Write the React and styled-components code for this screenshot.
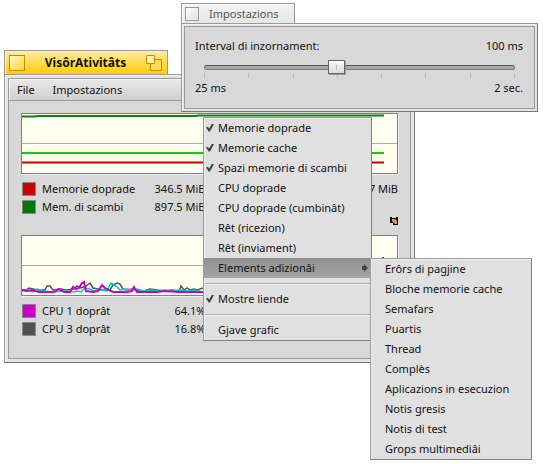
import React, { useState } from "react";
import styled, { createGlobalStyle, css } from "styled-components";

const Global = createGlobalStyle`
  *, *::before, *::after { box-sizing: border-box; }
  body {
    margin: 0;
    background: #fff;
    color: #111;
    font: 11px/20px "Noto Sans", "Open Sans", sans-serif;
  }
  button, input { font: inherit; color: inherit; margin: 0; }
`;

const Desktop = styled.main`
  position: relative;
  min-height: 100vh;
  overflow: hidden;
`;

const WindowShell = styled.section`
  position: absolute;
  display: flex;
  flex-direction: column;
  align-items: flex-start;
`;

const ActivityWindow = styled(WindowShell)`
  left: 4px;
  top: 50px;
  width: 411px;
`;

const SettingsWindow = styled(WindowShell)`
  left: 181px;
  top: 3px;
  width: 357px;
`;

const Tab = styled.header`
  display: flex;
  align-items: center;
  border: 1px solid #999;
  border-bottom: 0;
  ${(p) =>
    p.$active
      ? css`
          height: 24px;
          width: 164px;
          padding: 1px 4px 0;
          justify-content: space-between;
          background: linear-gradient(#ffedad, #ffe169 35%, #ffcb05);
          box-shadow: inset 1px 1px #fff0c0;
        `
      : css`
          height: 20px;
          width: 114px;
          padding: 1px 3px 0;
          gap: 10px;
          background: linear-gradient(#f3f3f3, #e6e6e6);
          color: #555;
          box-shadow: inset 1px 1px #fff;
        `}
`;

const Title = styled.h1`
  margin: 0;
  font-size: 12px;
  line-height: 20px;
  font-weight: 700;
`;

const QuietTitle = styled(Title)`
  font-size: 11px;
  font-weight: 400;
`;

const CloseButton = styled.button`
  width: ${(p) => (p.$active ? 16 : 14)}px;
  height: ${(p) => (p.$active ? 16 : 14)}px;
  padding: 0;
  border: 1px solid ${(p) => (p.$active ? "#b8900a" : "#999")};
  background: ${(p) =>
    p.$active
      ? "linear-gradient(135deg, #fff6cf, #ffd331)"
      : "linear-gradient(135deg, #fff, #dedede)"};
`;

const ZoomButton = styled.button`
  width: 17px;
  height: 17px;
  padding: 0;
  border: 0;
  background: none;
  svg { display: block; }
`;

const Frame = styled.div`
  width: 100%;
  padding: 3px;
  border: 1px solid #999;
  border-right-color: #777;
  border-bottom-color: #777;
  background: #e4e4e4;
  box-shadow: inset 1px 1px #f4f4f4;
`;

const SlimFrame = styled(Frame)`
  padding: 2px;
`;

const Client = styled.div`
  border: 1px solid #999;
  background: #d8d8d8;
`;

const MenuBar = styled.nav`
  display: flex;
  gap: 18px;
  height: 22px;
  padding: 0 8px;
  border-bottom: 1px solid #999;
  background: linear-gradient(#e9e9e9, #d0d0d0);
  box-shadow: inset 1px 1px #f4f4f4;
`;

const BarButton = styled.button`
  padding: 0;
  border: 0;
  background: none;
`;

const Monitor = styled.div`
  display: grid;
  gap: 19px;
  padding: 12px 12px 20px;
`;

const Graph = styled.div`
  height: 61px;
  border: 1px solid #808080;
  box-shadow: 1px 1px #eee;
  background: #fffff0;
  svg { display: block; width: 100%; height: 59px; }
`;

const Legend = styled.div`
  display: grid;
  grid-template-columns: 1fr 1fr;
  column-gap: 8px;
  padding-top: 6px;
`;

const Entry = styled.div`
  display: flex;
  align-items: center;
  height: 18px;
`;

const Swatch = styled.span`
  width: 14px;
  height: 14px;
  margin-left: 1px;
  margin-right: 6px;
  border: 1px solid #888;
  background: ${(p) => p.$color};
`;

const Value = styled.span`
  margin-left: auto;
`;

const Handle = styled.div`
  display: flex;
  justify-content: flex-end;
  height: 0;
  svg { flex: none; margin-top: 1px; }
`;

const Settings = styled.div`
  padding: 9px 11px 10px 10px;
`;

const Line = styled.div`
  display: flex;
  justify-content: space-between;
`;

const SliderBox = styled.div`
  position: relative;
  height: 22px;
  &::before {
    content: "";
    position: absolute;
    left: 9px;
    right: 8px;
    top: 9px;
    height: 5px;
    border: 1px solid #777;
    border-top-color: #555;
    border-radius: 3px;
    background: #aaa;
  }
`;

const Slider = styled.input`
  position: relative;
  display: block;
  appearance: none;
  width: 100%;
  height: 22px;
  background: none;
  &::-webkit-slider-thumb {
    appearance: none;
    width: 17px;
    height: 14px;
    border: 1px solid #666;
    background:
      linear-gradient(#bbb, #bbb) center / 1px 5px no-repeat,
      linear-gradient(#fafafa, #dcdcdc);
    box-shadow: 1px 1px #999;
  }
`;

const Ticks = styled.div`
  display: flex;
  justify-content: space-between;
  height: 5px;
  margin: -5px 8px 0 9px;
  i { width: 1px; background: #bbb; }
`;

const Popup = styled.div`
  position: absolute;
  left: ${(p) => p.$x}px;
  top: ${(p) => p.$y}px;
  width: ${(p) => p.$w}px;
  border: 1px solid #999;
  border-right-color: #808080;
  border-bottom-color: #808080;
  background: #e0e0e0;
  box-shadow: inset 1px 1px #eee;
`;

const Item = styled.button`
  display: flex;
  align-items: center;
  width: 100%;
  height: 20px;
  padding: 0 2px 0 14px;
  border: 0;
  background: ${(p) => (p.$selected ? "linear-gradient(#919191, #a5a5a5)" : "none")};
  text-align: left;
  white-space: nowrap;
  svg { flex: none; }
`;

const CheckSlot = styled.span`
  display: flex;
  align-items: center;
  width: 10px;
  margin-left: -12px;
  margin-right: 2px;
`;

const Arrow = styled.svg`
  margin-left: auto;
`;

const Rule = styled.hr`
  height: 2px;
  margin: 5px 1px 4px;
  border: 0;
  border-top: 1px solid #aaa;
  background: #f4f4f4;
`;

const elements = [
  ["Memorie doprade", true],
  ["Memorie cache", true],
  ["Spazi memorie di scambi", true],
  ["CPU doprade", false],
  ["CPU doprade (cumbinât)", false],
  ["Rêt (ricezion)", false],
  ["Rêt (inviament)", false],
];

const extras = [
  "Erôrs di pagjine",
  "Bloche memorie cache",
  "Semafars",
  "Puartis",
  "Thread",
  "Complès",
  "Aplicazions in esecuzion",
  "Notis gresis",
  "Notis di test",
  "Grops multimediâi",
];

function MenuItem({ label, checked, arrow }) {
  return (
    <Item
      type="button"
      role={checked === undefined ? "menuitem" : "menuitemcheckbox"}
      aria-checked={checked}
      $selected={arrow}
    >
      <CheckSlot>
        {checked && (
          <svg width="8" height="8" viewBox="0 0 9 9" fill="#444">
            <path d="M0 4l2-1 1.500 2L6.500 0H9L4.500 8.500H3z" />
          </svg>
        )}
      </CheckSlot>
      {label}
      {arrow && (
        <Arrow width="8" height="8" viewBox="0 0 8 8">
          <path d="M1 2h2V0l4 4-4 4V6H1z" fill="#444" />
        </Arrow>
      )}
    </Item>
  );
}

function LegendEntry({ color, label, value }) {
  return (
    <Entry>
      {color && <Swatch $color={color} />}
      {label}
      <Value>{value}</Value>
    </Entry>
  );
}

export default function App() {
  const [speed, setSpeed] = useState(3);
  return (
    <Desktop>
      <Global />
      <ActivityWindow>
        <Tab $active>
          <CloseButton $active aria-label="Siere" />
          <Title>VisôrAtivitâts</Title>
          <ZoomButton aria-label="Ingrandìs">
            <svg width="17" height="17" viewBox="0 0 17 17" fill="#ffdc50" stroke="#b8900a">
              <path d="M4.500 4.500h11v11h-11z" />
              <path d="M.5 .5h8v8h-8z" fill="#fff0a8" />
            </svg>
          </ZoomButton>
        </Tab>
        <Frame>
          <Client>
            <MenuBar>
              <BarButton>File</BarButton>
              <BarButton>Impostazions</BarButton>
            </MenuBar>
            <Monitor>
              <div>
                <Graph>
                  <svg viewBox="0 0 375 59" preserveAspectRatio="none" fill="none">
                    <path d="M0 29.500h375" stroke="#aaa" />
                    <path d="M0 2.500h13l2-.5h158l4-.5h185" stroke="#108010" strokeWidth="2" />
                    <path d="M0 39h362" stroke="#12c812" strokeWidth="2" />
                    <path d="M0 48.500h362" stroke="#c80000" strokeWidth="2" />
                  </svg>
                </Graph>
                <Legend>
                  <LegendEntry color="#c80000" label="Memorie doprade" value="346.5 MiB" />
                  <LegendEntry value="7 MiB" />
                  <LegendEntry color="#007800" label="Mem. di scambi" value="897.5 MiB" />
                </Legend>
                <Handle>
                  <svg width="8" height="8" viewBox="0 0 8 8">
                    <path d="M0 0h2v1h4V0h2v8H3V6H0z" fill="#111" />
                    <path d="M2 2h3l2 2v3H5L2 4z" fill="#d89a60" />
                  </svg>
                </Handle>
              </div>
              <div>
                <Graph>
                  <svg viewBox="0 0 375 59" preserveAspectRatio="none" fill="none" strokeWidth="1.5">
                    <path d="M0 29.500h375" stroke="#aaa" strokeWidth="1" />
                    <path stroke="#555" d="M0 54l4 0 3-2 4 1 4 1 8 0 2-4 3 0 3 4 8-1 5 1 8-1 3-3 4 2 5-2 4-3 3 5 5 1 5 1 7 0 3-5 4-2 3 1 3 5 4 1 5-1 4 1 8 1 6-2 7 1 8 1 7-1 7 1 2-5 3 4 3-2 3 2 4-1 4 1 4-2 3 2 5-2 4 2 4-2 4 3h183" />
                    <path stroke="#00c8c8" d="M0 55l6-1 5 2 4-3 6 2 10 1 10-1 10 1 4-1 4 1 4-4 5 1 4 2 7-1 6 1 4-8 5 3 4 4 7-1 5 1 5-1 6 2 8-1 7 1 7-1 7 1 8-1 8 1 7-1 7 2 8-1h188" />
                    <path stroke="#c800c8" strokeWidth="2" d="M0 54l5 1 5-1 7 2h15l5-3 5 3h6l3-5 3 2 3-1 3-5 2-1 2 9 7 1 5-1 4-6 3 3 4 2 4 2h14l5-1 2-4 3 5h20l7-1 15 1h180l15-1" />
                    <path stroke="#d800d8" strokeWidth="2" d="M361 21v13" />
                  </svg>
                </Graph>
                <Legend>
                  <LegendEntry color="#c800c8" label="CPU 1 doprât" value="64.1%" />
                  <span />
                  <LegendEntry color="#505050" label="CPU 3 doprât" value="16.8%" />
                </Legend>
              </div>
            </Monitor>
          </Client>
        </Frame>
      </ActivityWindow>

      <SettingsWindow>
        <Tab>
          <CloseButton aria-label="Siere" />
          <QuietTitle>Impostazions</QuietTitle>
        </Tab>
        <SlimFrame>
          <Client>
            <Settings>
              <Line>
                <label htmlFor="speed">Interval di inzornament:</label>
                <output htmlFor="speed">100 ms</output>
              </Line>
              <SliderBox>
                <Slider id="speed" type="range" min="0" max="7" value={speed} onChange={(e) => setSpeed(+e.target.value)} />
              </SliderBox>
              <Ticks>
                {[0, 1, 2, 3, 4, 5, 6, 7].map((n) => <i key={n} />)}
              </Ticks>
              <Line>
                <span>25 ms</span>
                <span>2 sec.</span>
              </Line>
            </Settings>
          </Client>
        </SlimFrame>
      </SettingsWindow>

      <Popup role="menu" $x={203} $y={117} $w={169}>
        {elements.map(([label, checked]) => <MenuItem key={label} label={label} checked={checked} />)}
        <MenuItem label="Elements adizionâi" arrow />
        <Rule />
        <MenuItem label="Mostre liende" checked />
        <Rule />
        <MenuItem label="Gjave grafic" />
      </Popup>
      <Popup role="menu" $x={370} $y={258} $w={162}>
        {extras.map((label) => <MenuItem key={label} label={label} />)}
      </Popup>
    </Desktop>
  );
}
